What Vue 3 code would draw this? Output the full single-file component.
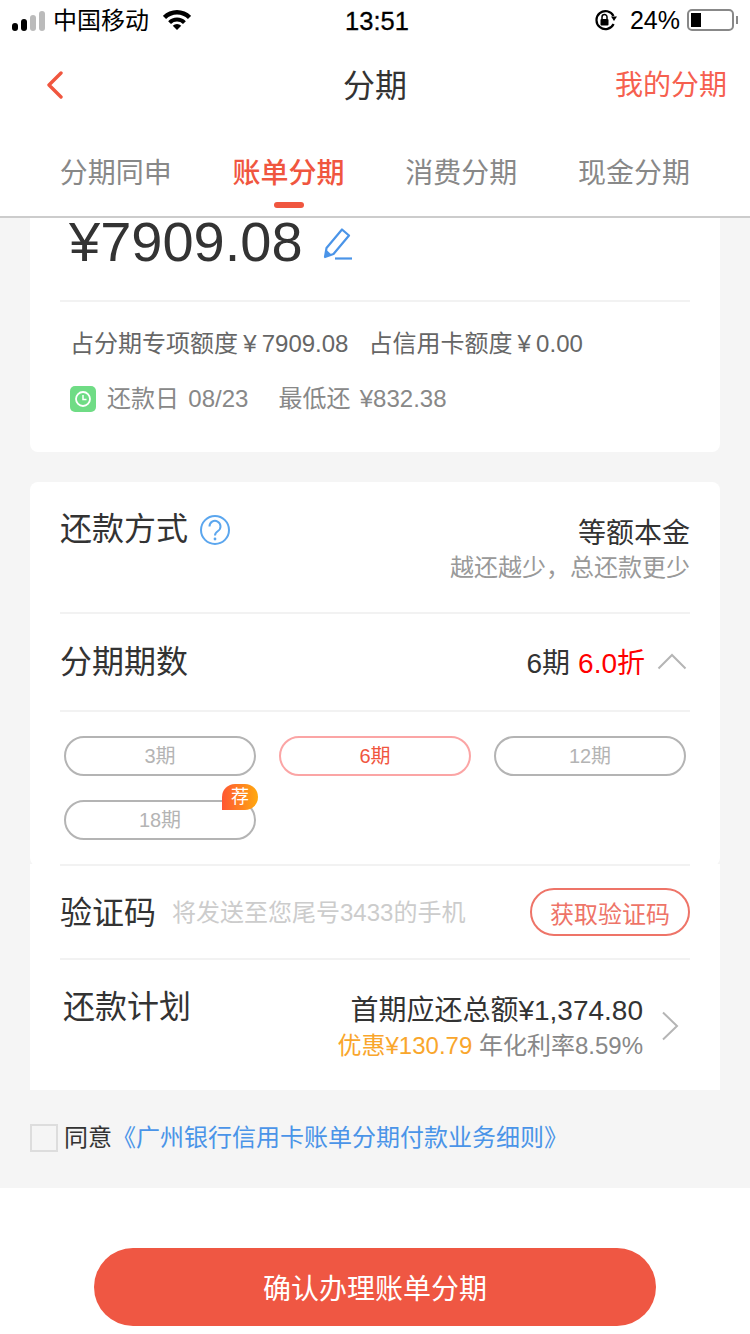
<template>
  <div class="page">
    <header class="top">
      <div class="status">
        <div class="status-left">
          <div class="signal">
            <i v-for="(h, i) in signal" :key="i" :class="{ off: i > 1 }" :style="{ height: h + 'px' }"></i>
          </div>
          <span class="carrier">中国移动</span>
          <svg class="wifi" width="28" height="20" viewBox="0 0 28 20">
            <path d="M14 20 9.760 15.760a6 6 0 0 1 8.480 0Z" fill="#000" />
            <path d="M5.160 11.160a12.500 12.500 0 0 1 17.680 0L20 14a8.500 8.500 0 0 0-12 0Z" fill="#000" />
            <path d="M-.14 5.860a20 20 0 0 1 28.280 0L24.960 9.040a15.500 15.500 0 0 0-21.920 0Z" fill="#000" />
          </svg>
        </div>
        <span class="time">13:51</span>
        <div class="status-right">
          <svg width="24" height="22" viewBox="0 0 24 22">
            <path d="M19.500 7A9 9 0 1 0 19.600 15" fill="none" stroke="#000" stroke-width="2.200" />
            <path d="M17 7.500h6L20 12Z" fill="#000" />
            <rect x="6.500" y="10" width="8" height="6.500" rx="1" fill="#000" />
            <path d="M8 10V8a2.500 2.500 0 0 1 5 0v2" fill="none" stroke="#000" stroke-width="1.500" />
          </svg>
          <span class="percent">24%</span>
          <div class="battery"><b></b></div>
          <div class="nub"></div>
        </div>
      </div>
      <div class="nav">
        <svg class="back" width="18" height="28" viewBox="0 0 18 28">
          <path d="M15 2 3 14l12 12" fill="none" stroke="#f0563f" stroke-width="3.400" stroke-linecap="round" stroke-linejoin="round" />
        </svg>
        <h1>分期</h1>
        <a>我的分期</a>
      </div>
      <div class="tabs">
        <div v-for="t in tabs" :key="t" class="tab" :class="{ active: t === '账单分期' }">{{ t }}</div>
      </div>
    </header>

    <main class="body">
      <section class="card first">
        <div class="amount">
          <span>¥7909.08</span>
          <svg width="32" height="34" viewBox="0 0 32 34">
            <path d="M3 31 4.500 22 20 3.500 27 9.500 11.500 28Z" fill="none" stroke="#4a94e8" stroke-width="2.200" stroke-linejoin="round" />
            <path d="M3 31 4.500 24 9.500 28.500Z" fill="#4a94e8" />
            <path d="M13 32.500h17" stroke="#4a94e8" stroke-width="2.200" />
          </svg>
        </div>
        <div class="quota">
          <span>占分期专项额度 ¥ 7909.08</span>
          <span>占信用卡额度 ¥ 0.00</span>
        </div>
        <div class="due">
          <span class="clock">
            <svg width="18" height="18" viewBox="0 0 18 18">
              <circle cx="9" cy="9" r="7" fill="none" stroke="#fff" stroke-width="1.800" />
              <path d="M9 5v4.500h3.500" fill="none" stroke="#fff" stroke-width="1.500" />
            </svg>
          </span>
          <span class="due-date">还款日&nbsp;&nbsp;08/23</span>
          <span>最低还&nbsp;&nbsp;¥832.38</span>
        </div>
      </section>

      <section class="card second">
        <div class="method">
          <div class="method-title">
            <span class="label">还款方式</span>
            <svg width="32" height="32" viewBox="0 0 32 32">
              <circle cx="16" cy="16" r="14" fill="none" stroke="#5ba6ee" stroke-width="2" />
              <path d="M10.500 12.500a5.500 5.500 0 1 1 8.500 4.500c-2 1.300-3 2.300-3 4.500" fill="none" stroke="#5ba6ee" stroke-width="2" />
              <circle cx="16" cy="25" r="1.400" fill="#5ba6ee" />
            </svg>
          </div>
          <div class="method-value">
            <div>等额本金</div>
            <small>越还越少，总还款更少</small>
          </div>
        </div>
        <div class="periods">
          <span class="label">分期期数</span>
          <div class="period-value">
            <span>6期</span>
            <em>6.0折</em>
            <svg width="30" height="18" viewBox="0 0 30 18">
              <path d="M1.500 16.500 15 3l13.500 13.500" fill="none" stroke="#b5b5b5" stroke-width="2" />
            </svg>
          </div>
        </div>
        <div class="pills">
          <div v-for="p in pills" :key="p" class="pill" :class="{ on: p === '6期' }">
            {{ p }}
            <span v-if="p === '18期'" class="badge">荐</span>
          </div>
        </div>
      </section>

      <section class="card third">
        <div class="code">
          <span class="label">验证码</span>
          <span class="hint">将发送至您尾号3433的手机</span>
          <button>获取验证码</button>
        </div>
        <div class="plan">
          <span class="label">还款计划</span>
          <div class="plan-value">
            <div>首期应还总额¥1,374.80</div>
            <small><em>优惠¥130.79</em> 年化利率8.59%</small>
          </div>
          <svg width="18" height="30" viewBox="0 0 18 30">
            <path d="M2 1.500 16 15 2 28.500" fill="none" stroke="#b5b5b5" stroke-width="2" />
          </svg>
        </div>
      </section>

      <div class="agree">
        <span class="box"></span>
        <span class="agree-text">同意</span>
        <a>《广州银行信用卡账单分期付款业务细则》</a>
      </div>
    </main>

    <footer class="foot">
      <button>确认办理账单分期</button>
    </footer>
  </div>
</template>

<script setup>
const signal = [8, 12, 16, 20];
const tabs = ['分期同申', '账单分期', '消费分期', '现金分期'];
const pills = ['3期', '6期', '12期', '18期'];
</script>

<style>
body {
  margin: 0;
  background: #fff;
}
</style>

<style scoped>
.page {
  width: 750px;
  height: 1334px;
  overflow: hidden;
  display: flex;
  flex-direction: column;
  background: #fff;
  color: #333;
  font-family: "Liberation Sans", "Noto Sans CJK SC", sans-serif;
}

.top {
  height: 216px;
  border-bottom: 2px solid #ccc;
  flex: none;
}

.status {
  height: 40px;
  display: grid;
  grid-template-columns: 1fr auto 1fr;
  align-items: center;
  color: #000;
}
.status-left {
  display: flex;
  align-items: center;
  padding-left: 12px;
}
.signal {
  display: flex;
  align-items: flex-end;
  gap: 3px;
  height: 20px;
  width: 33px;
  margin-top: 2px;
}
.signal i {
  width: 6px;
  border-radius: 3px;
  background: #000;
}
.signal i.off {
  background: #bbb;
}
.carrier {
  font-size: 24px;
  margin: -4px 0 0 8px;
}
.wifi {
  margin-left: 14px;
}
.time {
  font-size: 25.500px;
  padding-left: 4px;
  -webkit-text-stroke: 0.3px #000;
  margin-top: 2px;
}
.status-right {
  display: flex;
  align-items: center;
  justify-content: flex-end;
  padding-right: 12px;
}
.percent {
  font-size: 25px;
  margin: 0 7px 0 12px;
}
.battery {
  width: 47px;
  height: 22px;
  box-sizing: border-box;
  border: 2px solid #888;
  border-radius: 5px;
  padding: 2px;
}
.battery b {
  display: block;
  width: 10px;
  height: 100%;
  background: #000;
}
.nub {
  width: 2px;
  height: 8px;
  margin-left: 2px;
  background: #888;
}

.nav {
  height: 90px;
  display: flex;
  align-items: center;
  justify-content: space-between;
  position: relative;
  padding: 0 23px 0 46px;
}
.nav h1 {
  position: absolute;
  top: 23px;
  left: 0;
  right: 0;
  margin: 0;
  text-align: center;
  font-size: 32px;
  line-height: 46px;
  font-weight: 400;
}
.nav a {
  font-size: 28px;
  margin-top: -4px;
  color: #f6604f;
}

.tabs {
  height: 86px;
  padding: 0 29.500px;
  display: grid;
  grid-template-columns: repeat(4, 172.7px);
}
.tab {
  position: relative;
  text-align: center;
  padding-top: 23px;
  font-size: 28px;
  line-height: 41px;
  color: #888;
}
.tab.active {
  color: #f0563f;
  font-weight: 500;
}
.tab.active::after {
  content: "";
  position: absolute;
  left: 72px;
  bottom: 8px;
  width: 30px;
  height: 6px;
  border-radius: 3px;
  background: #f0563f;
}

.body {
  height: 970px;
  flex: none;
  box-sizing: border-box;
  padding: 0 30px;
  background: #f5f5f5;
}

.card {
  background: #fff;
  border-radius: 0 0 8px 8px;
}
.label {
  font-size: 32px;
}

.first {
  height: 234px;
  box-sizing: border-box;
  padding: 0 30px;
}
.amount {
  height: 84px;
  box-sizing: border-box;
  padding-left: 9px;
  display: flex;
  align-items: flex-start;
  border-bottom: 2px solid #f2f2f2;
  font-size: 56px;
  line-height: 48px;
}
.amount svg {
  margin: 8px 0 0 19px;
}
.quota {
  margin-top: 24px;
  padding-left: 10px;
  display: flex;
  gap: 20px;
  font-size: 24px;
  line-height: 36px;
  word-spacing: -1.500px;
  color: #666;
}
.due {
  margin-top: 19px;
  padding-left: 10px;
  display: flex;
  align-items: center;
  font-size: 24px;
  line-height: 36px;
  word-spacing: -2px;
  color: #888;
}
.clock {
  width: 26px;
  height: 26px;
  display: flex;
  align-items: center;
  justify-content: center;
  border-radius: 5px;
  background: #6fdc85;
}
.due-date {
  margin: 0 30px 0 11px;
}

.second {
  margin-top: 30px;
  height: 384px;
  box-sizing: border-box;
  padding: 0 30px;
  border-radius: 8px;
}
.method {
  height: 130px;
  display: flex;
  justify-content: space-between;
  border-bottom: 2px solid #f2f2f2;
}
.method-title {
  display: flex;
  align-items: center;
  gap: 11px;
  height: 94px;
}
.method-title .label {
  margin-top: -6px;
}
.method-title svg {
  margin-top: 2px;
}
.method-value {
  padding-top: 31px;
  text-align: right;
  font-size: 28px;
  line-height: 42px;
}
.method-value small {
  display: block;
  margin-top: -5px;
  font-size: 24px;
  line-height: 36px;
  color: #999;
}
.periods {
  height: 96px;
  display: flex;
  align-items: center;
  justify-content: space-between;
  border-bottom: 2px solid #f2f2f2;
}
.periods .label {
  margin-top: -6px;
}
.period-value {
  display: flex;
  align-items: center;
  margin-top: -2px;
  font-size: 28px;
}
.period-value em {
  font-style: normal;
  color: #f00;
  margin: 0 12px 0 8px;
}
.period-value svg {
  margin-right: 3px;
}
.pills {
  padding: 24px 4px 0;
  display: grid;
  grid-template-columns: repeat(3, 192px);
  gap: 24px 23px;
}
.pill {
  position: relative;
  height: 40px;
  box-sizing: border-box;
  border: 2px solid #b4b4b4;
  border-radius: 20px;
  background: #fff;
  font-size: 20px;
  line-height: 36px;
  text-align: center;
  color: #b4b4b4;
}
.pill.on {
  border-color: #fba5a5;
  color: #f0563f;
}
.badge {
  position: absolute;
  top: -18px;
  right: -4px;
  width: 36px;
  height: 26px;
  border-radius: 13px 13px 13px 0;
  background: linear-gradient(90deg, #ff5733, #ffa90f);
  font-size: 18px;
  line-height: 26px;
  color: #fff;
}

.third {
  height: 226px;
  box-sizing: border-box;
  padding: 0 30px;
  border-radius: 0;
}
.code {
  height: 96px;
  box-sizing: border-box;
  border-top: 2px solid #f2f2f2;
  margin-top: -2px;
  display: flex;
  align-items: center;
  border-bottom: 2px solid #f2f2f2;
}
.code .label {
  margin-top: -5px;
}
.hint {
  margin: -3px 0 0 16px;
  font-size: 24px;
  color: #ccc;
}
.code button {
  margin-left: auto;
  width: 160px;
  height: 48px;
  padding: 0;
  background: #fff;
  border: 2px solid #ee7468;
  border-radius: 24px;
  font: inherit;
  font-size: 24px;
  color: #ee7468;
}
.plan {
  display: flex;
  padding-left: 3px;
  position: relative;
}
.plan .label {
  margin-top: 23px;
  line-height: 48px;
}
.plan-value {
  margin-left: auto;
  margin-right: 18px;
  padding-top: 31px;
  text-align: right;
  font-size: 28px;
  line-height: 40px;
}
.plan-value small {
  display: block;
  margin-top: -3px;
  font-size: 24px;
  line-height: 36px;
  color: #888;
}
.plan-value em {
  font-style: normal;
  color: #f9a62c;
}
.plan svg {
  margin: 51px 11px 0 0;
}

.agree {
  height: 98px;
  display: flex;
  align-items: center;
  font-size: 24px;
}
.box {
  width: 28px;
  height: 28px;
  box-sizing: border-box;
  border: 2px solid #ddd;
  margin-top: -2px;
}
.agree-text {
  margin: -8px 0 0 6px;
}
.agree a {
  margin-top: -8px;
  color: #4a94e8;
}

.foot {
  flex: 1;
  padding-top: 60px;
  display: flex;
  justify-content: center;
  align-items: flex-start;
}
.foot button {
  width: 562px;
  height: 78px;
  border: 0;
  border-radius: 39px;
  background: #ef5743;
  font: inherit;
  font-size: 28px;
  color: #fff;
}
</style>
